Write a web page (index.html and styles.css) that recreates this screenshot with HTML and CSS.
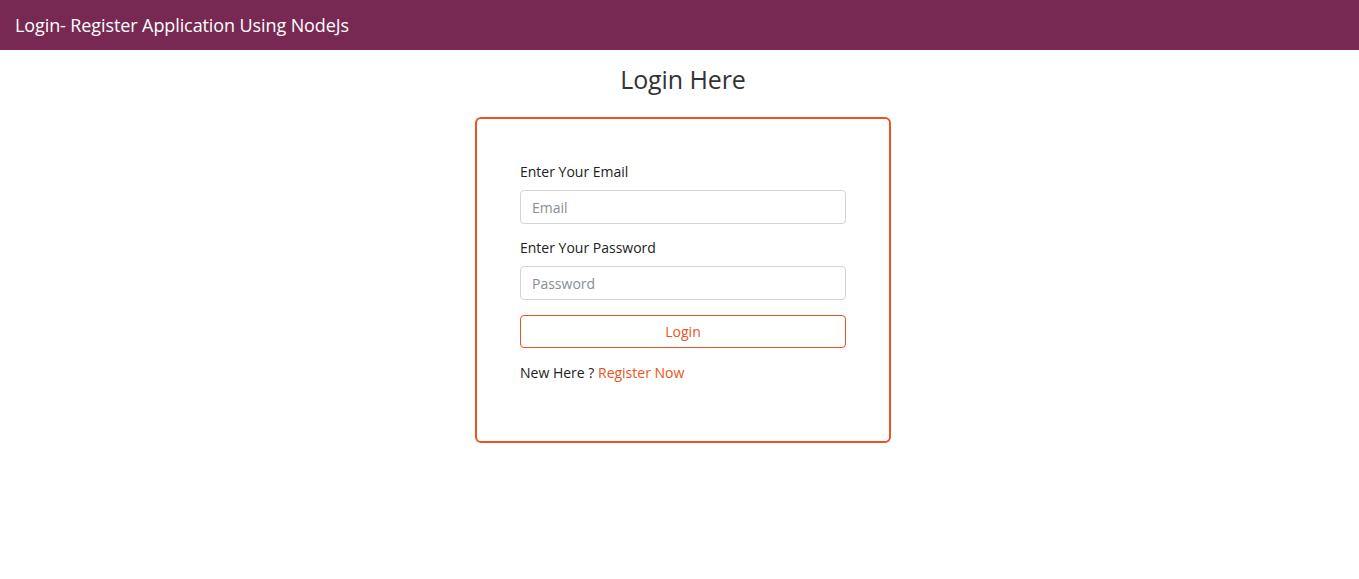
FILE: index.html
```html
<!DOCTYPE html>
<html>
<head>
<meta charset="utf-8">
<link rel="stylesheet" href="styles.css">
</head>
<body>
<nav class="navbar">
  <span class="brand">Login- Register Application Using NodeJs</span>
</nav>
<main class="main">
  <h2 class="title">Login Here</h2>
  <form class="card">
    <label class="label">Enter Your Email</label>
    <input class="input" type="text" placeholder="Email">
    <label class="label">Enter Your Password</label>
    <input class="input" type="password" placeholder="Password">
    <button type="button" class="btn">Login</button>
    <p class="note">New Here ? <a class="link" href="#">Register Now</a></p>
  </form>
</main>
</body>
</html>
```

FILE: styles.css
```css
* { box-sizing: border-box; }
body {
  margin: 0;
  font-family: "Open Sans", "Noto Sans", sans-serif;
  color: #333;
  background: #fff;
}
.navbar {
  height: 50px;
  background: #772953;
  display: flex;
  align-items: center;
  padding: 0 15px;
}
.brand {
  color: #fff;
  font-size: 18px;
  letter-spacing: -0.1px;
}
.main {
  display: flex;
  flex-direction: column;
  align-items: center;
  padding-left: 7px;
}
.title {
  margin: 13px 0 0;
  font-size: 25px;
  font-weight: 400;
  line-height: 33px;
  color: #333;
  letter-spacing: -0.1px;
}
.card {
  margin-top: 21px;
  width: 416px;
  height: 326px;
  border: 2px solid #E95420;
  border-radius: 6px;
  padding: 43px 43px 0 43px;
  display: flex;
  flex-direction: column;
}
.label {
  font-size: 14px;
  line-height: 20px;
  color: #222;
  margin-bottom: 8px;
}
.input {
  height: 34px;
  border: 1px solid #ced4da;
  border-radius: 4px;
  padding: 0 11px;
  font-family: inherit;
  font-size: 14px;
  color: #333;
  margin-bottom: 14px;
  outline: none;
}
.input::placeholder { color: #868e96; }
.btn {
  margin-top: 1px;
  height: 33px;
  background: #fff;
  border: 1px solid #E95420;
  border-radius: 4px;
  color: #E95420;
  font-family: inherit;
  font-size: 14px;
}
.note {
  margin: 15px 0 0;
  font-size: 14px;
  line-height: 20px;
  color: #222;
}
.link {
  color: #E95420;
  text-decoration: none;
}
```
